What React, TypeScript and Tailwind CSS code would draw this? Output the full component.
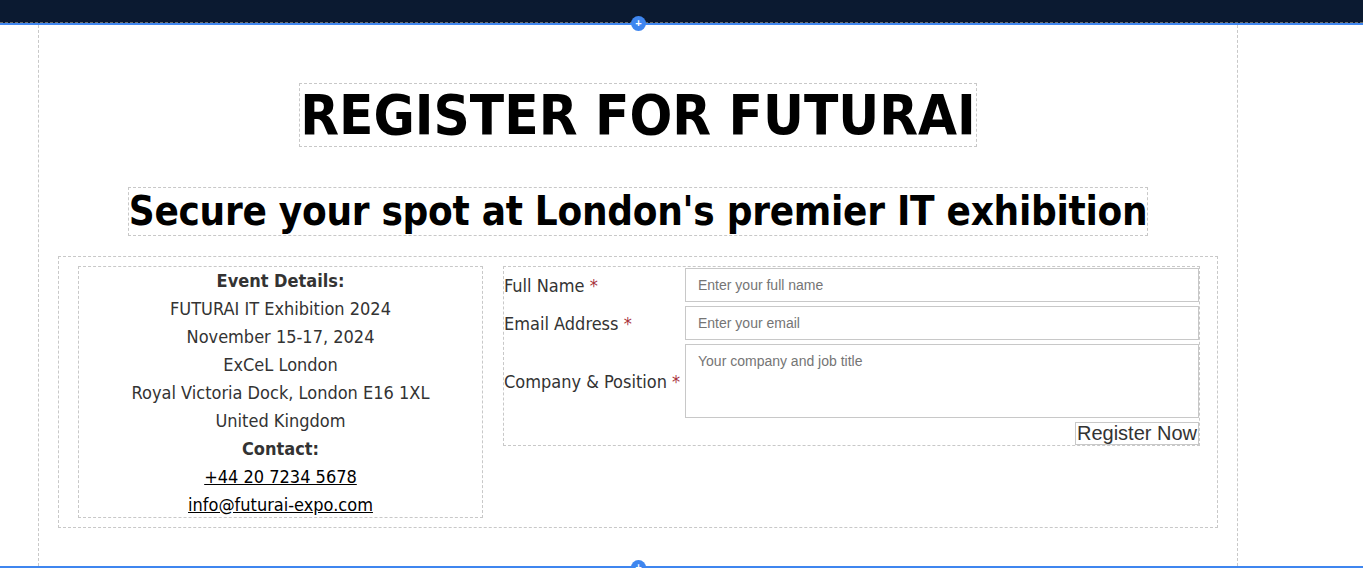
import React from "react";

const tahoma = "font-['DejaVu_Sans_Condensed','DejaVu_Sans',Verdana,sans-serif] font-stretch-condensed";
const arial = "font-['Liberation_Sans',Arial,sans-serif]";

const PlusDot = ({ className }: { className: string }) => (
  <div
    className={`absolute left-[631px] flex h-[15px] w-[15px] items-center justify-center rounded-full bg-[#3f86ef] text-[11px] font-bold leading-none text-white ${arial} ${className}`}
  >
    +
  </div>
);

const Field = ({ label, children }: { label: string; children: React.ReactNode }) => (
  <>
    <label className={`whitespace-nowrap text-[18px] text-[#333] ${tahoma}`}>
      {label} <span className="text-[#a8323c]">*</span>
    </label>
    {children}
  </>
);

const App = () => {
  return (
    <div className="h-[568px] w-[1363px] overflow-hidden bg-white">
      <div className="h-[23px] border-b border-dashed border-[#6b6b6b] bg-[#0b1a31]" />
      <div className="relative h-[545px] border-y-2 border-[#3f86ef]">
        <PlusDot className="top-[-9px]" />
        <PlusDot className="bottom-[-9px]" />
        <div className="ml-[38px] flex h-full w-[1200px] flex-col items-center border-x border-dashed border-[#c8c8c8] px-[19px]">
          <h1
            className={`mt-[58px] border border-dashed border-[#c8c8c8] text-[56px] font-bold leading-[62px] text-black ${tahoma}`}
          >
            REGISTER FOR FUTURAI
          </h1>
          <h2
            className={`mt-[40px] border border-dashed border-[#c8c8c8] text-[40px] font-bold leading-[47px] tracking-[-0.28px] text-black ${tahoma}`}
          >
            Secure your spot at London's premier IT exhibition
          </h2>
          <div className="mt-[20px] flex w-full gap-[20px] border border-dashed border-[#c8c8c8] px-[19px] py-[9px]">
            <div
              className={`h-[252px] w-[405px] shrink-0 border border-dashed border-[#c8c8c8] text-center text-[18px] leading-[28px] text-[#333] ${tahoma}`}
            >
              <p className="font-bold">Event Details:</p>
              <p>FUTURAI IT Exhibition 2024</p>
              <p>November 15-17, 2024</p>
              <p>ExCeL London</p>
              <p>Royal Victoria Dock, London E16 1XL</p>
              <p>United Kingdom</p>
              <p className="font-bold">Contact:</p>
              <p>
                <a href="#" className="text-black underline">
                  +44 20 7234 5678
                </a>
              </p>
              <p>
                <a href="#" className="text-black underline">
                  info@futurai-expo.com
                </a>
              </p>
            </div>
            <form className="grid h-fit w-[697px] shrink-0 grid-cols-[181px_1fr] items-center gap-y-[4px] border border-dashed border-[#c8c8c8] pt-[1px]">
              <Field label="Full Name">
                <input
                  placeholder="Enter your full name"
                  className={`h-[34px] w-full border border-[#c8c8c8] px-[12px] text-[14px] text-[#333] outline-none placeholder:text-[#757575] ${arial}`}
                />
              </Field>
              <Field label="Email Address">
                <input
                  placeholder="Enter your email"
                  className={`h-[34px] w-full border border-[#c8c8c8] px-[12px] text-[14px] text-[#333] outline-none placeholder:text-[#757575] ${arial}`}
                />
              </Field>
              <Field label="Company & Position">
                <textarea
                  placeholder="Your company and job title"
                  className={`block h-[74px] w-full resize-none border border-[#c8c8c8] px-[12px] py-[8px] text-[14px] leading-[17px] text-[#333] outline-none placeholder:text-[#757575] ${arial}`}
                />
              </Field>
              <button
                type="button"
                className={`col-start-2 h-[23px] justify-self-end border border-[#c8c8c8] bg-white px-[1px] text-[20px] leading-[21px] text-[#333] ${arial}`}
              >
                Register Now
              </button>
            </form>
          </div>
        </div>
      </div>
    </div>
  );
};

export default App;
